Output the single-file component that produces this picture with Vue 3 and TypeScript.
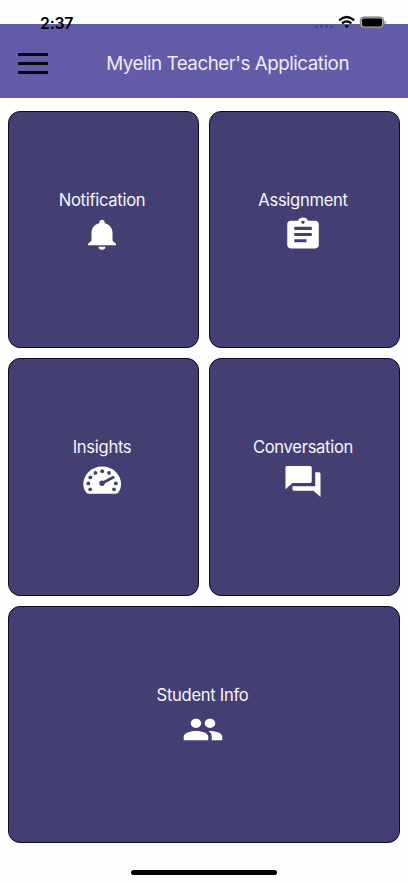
<script setup lang="ts">
interface Tile {
  label: string
  icon: string
  wide?: boolean
}

const tiles: Tile[] = [
  { label: 'Notification', icon: 'bell' },
  { label: 'Assignment', icon: 'assignment' },
  { label: 'Insights', icon: 'gauge' },
  { label: 'Conversation', icon: 'chat' },
  { label: 'Student Info', icon: 'people', wide: true },
]

const paths: Record<string, string> = {
  bell: 'M12 22c1.1 0 2-.9 2-2h-4c0 1.1.89 2 2 2zm6-6v-5c0-3.07-1.64-5.64-4.5-6.32V4c0-.83-.67-1.5-1.5-1.5s-1.5.67-1.5 1.5v.68C7.63 5.36 6 7.92 6 11v5l-2 2v1h16v-1l-2-2z',
  assignment:
    'M19 3h-4.18C14.4 1.84 13.3 1 12 1c-1.3 0-2.4.84-2.82 2H5c-1.1 0-2 .9-2 2v14c0 1.1.9 2 2 2h14c1.1 0 2-.9 2-2V5c0-1.1-.9-2-2-2zm-7 0c.55 0 1 .45 1 1s-.45 1-1 1-1-.45-1-1 .45-1 1-1zm2 14H7v-2h7v2zm3-4H7v-2h10v2zm0-4H7V7h10v2z',
  chat: 'M21 6h-2v9H6v2c0 .55.45 1 1 1h11l4 4V7c0-.55-.45-1-1-1zm-4 6V3c0-.55-.45-1-1-1H3c-.55 0-1 .45-1 1v14l4-4h10c.55 0 1-.45 1-1z',
  people:
    'M16 11c1.66 0 2.99-1.34 2.99-3S17.66 5 16 5c-1.66 0-3 1.34-3 3s1.34 3 3 3zm-8 0c1.66 0 2.99-1.34 2.99-3S9.66 5 8 5C6.34 5 5 6.34 5 8s1.34 3 3 3zm0 2c-2.33 0-7 1.17-7 3.5V19h14v-2.5c0-2.33-4.67-3.5-7-3.5zm8 0c-.29 0-.62.02-.97.05 1.16.84 1.97 1.97 1.97 3.45V19h6v-2.5c0-2.33-4.67-3.5-7-3.5z',
}

const gaugeDots: [number, number][] = [
  [9.2, 26.3], [7.4, 20.4], [9.3, 14.4], [14.4, 9.9], [21.2, 8.2],
  [28, 9.9], [34.8, 20.4], [33, 26.3],
]
</script>

<template>
  <div class="screen">
    <div class="status">
      <span class="time">2:37</span>
      <svg class="signals" viewBox="0 0 72 16">
        <g class="dots">
          <rect x="1" y="10" width="3" height="3" rx="1" />
          <rect x="6" y="10" width="3" height="3" rx="1" />
          <rect x="11" y="10" width="3" height="3" rx="1" />
          <rect x="16" y="10" width="3" height="3" rx="1" />
        </g>
        <g class="wifi">
          <path d="M25.2 5.3q7.5-6.6 15 0" />
          <path d="M28 8.4q4.7-4 9.4 0" />
        </g>
        <path d="M32.7 13.2l-2.3-2.4q2.3-1.8 4.6 0z" />
        <rect class="shell" x="46.3" y="2" width="23.2" height="11" rx="3.4" />
        <rect x="48" y="3.5" width="20" height="8" rx="2" />
        <path class="cap" d="M70.5 5.6q1.3.5 1.3 1.9t-1.3 1.9z" />
      </svg>
    </div>
    <header class="header">
      <button class="menu" aria-label="Menu"><i></i><i></i><i></i></button>
      <h1 class="title">Myelin Teacher's Application</h1>
    </header>
    <main class="grid">
      <section v-for="t in tiles" :key="t.label" class="tile" :class="{ wide: t.wide }">
        <span class="label">{{ t.label }}</span>
        <svg v-if="t.icon === 'gauge'" class="icon" viewBox="0 0 42 37">
          <path d="M21.2 3.4C10.500 3.400 2.300 11.600 2.300 21c0 3.600 1.100 6.200 2.900 8.500q1.200 1.300 3 1.300h26q1.800 0 3-1.300c1.800-2.300 2.900-4.900 2.900-8.500C40.100 11.600 31.900 3.400 21.200 3.400z" />
          <g class="cut">
            <circle v-for="([x, y], i) in gaugeDots" :key="i" :cx="x" :cy="y" r="1.9" />
            <circle cx="21" cy="20.3" r="2.7" />
            <path class="needle" d="M21 20.3L32.3 14.3" />
          </g>
        </svg>
        <svg v-else class="icon" viewBox="0 0 24 24" preserveAspectRatio="none">
          <path :d="paths[t.icon]" />
        </svg>
      </section>
    </main>
    <div class="home"></div>
  </div>
</template>

<style>
body {
  background: #fff;
}
</style>

<style scoped>
.screen {
  position: relative;
  display: flex;
  flex-direction: column;
  box-sizing: border-box;
  height: 883px;
  padding-top: 24px;
  overflow: hidden;
  background: #fefefe;
  font-family: Inter, 'Liberation Sans', sans-serif;
}
.status {
  position: absolute;
  top: 14px;
  left: 40px;
  right: 22px;
  display: flex;
  justify-content: space-between;
}
.time {
  font-size: 15.8px;
  line-height: 19px;
  font-weight: 600;
  letter-spacing: -0.2px;
  color: #000;
}
.signals {
  width: 72px;
  height: 16px;
  margin-top: 1px;
}
.dots {
  fill: #4c4785;
}
.wifi {
  fill: none;
  stroke: #000;
  stroke-width: 2.2;
}
.shell {
  fill: #aaa8b5;
  stroke: #77747f;
  stroke-width: 1;
}
.cap {
  fill: #77747f;
}
.header {
  display: flex;
  align-items: center;
  flex: none;
  box-sizing: border-box;
  height: 74px;
  padding: 4px 59px 0 18px;
  background: #625ba8;
}
.menu {
  display: flex;
  flex-direction: column;
  gap: 6px;
  width: 30px;
  padding: 0;
  border: 0;
  background: none;
}
.menu i {
  height: 3px;
  background: #080612;
}
.title {
  flex: 1;
  margin: 0;
  padding-top: 2px;
  text-align: right;
  white-space: nowrap;
  font-size: 18.8px;
  font-weight: 400;
  line-height: 24px;
  letter-spacing: -0.48px;
  color: #eeecfb;
}
.grid {
  display: grid;
  grid-template-columns: 1fr 1fr;
  grid-auto-rows: 237.5px;
  gap: 10px;
  padding: 12.6px 8px 0;
}
.tile {
  display: flex;
  flex-direction: column;
  align-items: center;
  box-sizing: border-box;
  padding: 77.4px 3px 0 0;
  border: 1.5px solid #0d0a22;
  border-radius: 12px;
  background: #443f73;
}
.wide {
  grid-column: span 2;
}
.label {
  font-size: 16.6px;
  line-height: 22px;
  letter-spacing: -0.3px;
  color: #f6f5ff;
}
.icon {
  width: 42px;
  height: 37px;
  margin-top: 4.6px;
  fill: #fff;
}
.cut {
  fill: #443f73;
}
.needle {
  stroke: #443f73;
  stroke-width: 2.7;
  stroke-linecap: round;
}
.home {
  position: absolute;
  left: 131px;
  bottom: 8px;
  width: 146px;
  height: 5px;
  border-radius: 3px;
  background: #000;
}
</style>
